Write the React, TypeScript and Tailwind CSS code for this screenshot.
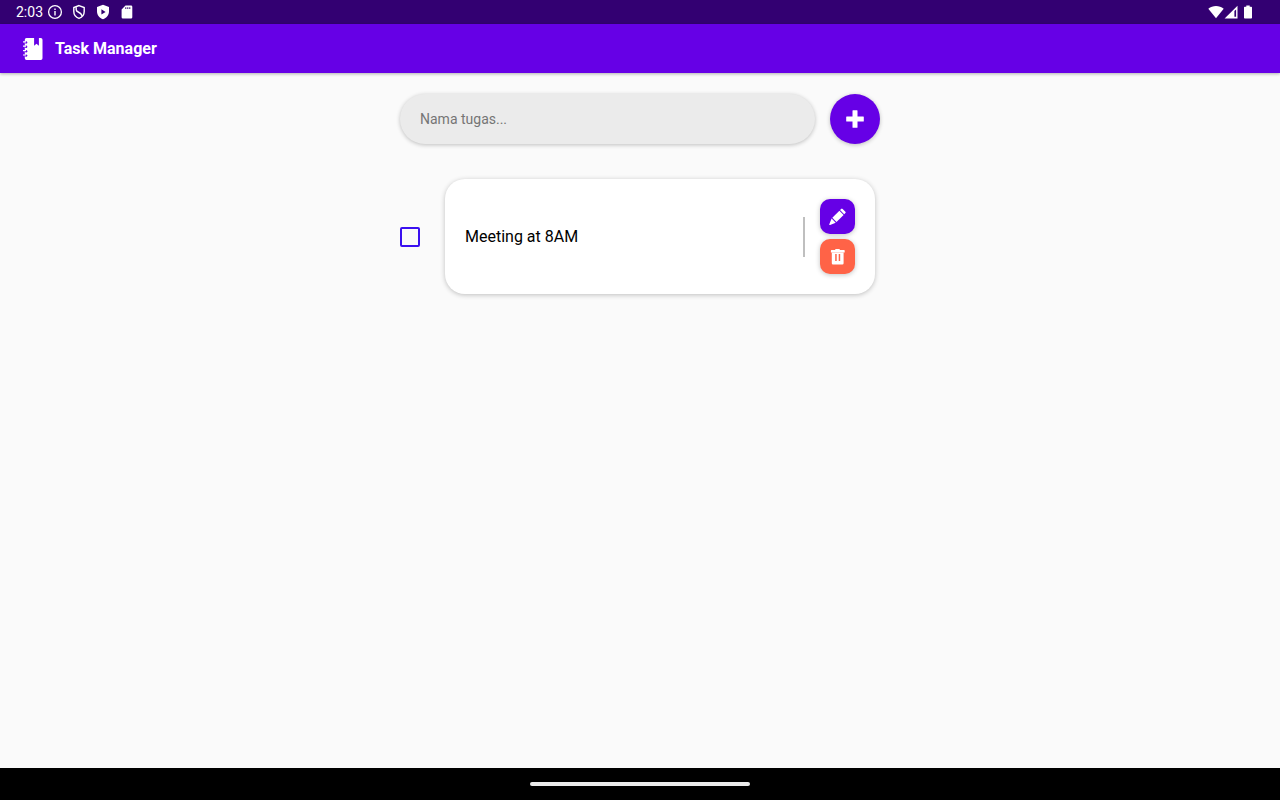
import React, { useState } from 'react';

const InfoIcon = () => (
	<svg className="w-4 h-4" viewBox="0 0 16 16" fill="none" stroke="currentColor">
		<circle cx="8" cy="8" r="6.4" strokeWidth="1.3" />
		<path d="M8 7v4.4M8 4.4v1.5" strokeWidth="1.4" />
	</svg>
);

const ShieldOffIcon = () => (
	<svg className="w-4 h-4" viewBox="0 0 16 16" fill="none" stroke="currentColor" strokeWidth="1.4">
		<path d="M8 1.6 13.2 3.6v4c0 3.2-2.2 5.8-5.2 6.8-3-1-5.2-3.6-5.2-6.8v-4z" />
		<path d="M5.2 3.2v2.6c0 1.2.8 1.7 2 2.2 1.6.7 3.2 1.8 4 4" />
	</svg>
);

const ShieldPlayIcon = () => (
	<svg className="w-4 h-4" viewBox="0 0 16 16" fill="currentColor">
		<path fillRule="evenodd" d="M8 .8 14 3v4.6c0 3.5-2.5 6.6-6 7.6-3.5-1-6-4.1-6-7.6V3zM6.4 5.2v5.4L10.6 7.9z" />
	</svg>
);

const SdCardIcon = () => (
	<svg className="w-4 h-4" viewBox="0 0 16 16" fill="currentColor">
		<path fillRule="evenodd" d="M6.5 1.5H12a1.3 1.3 0 0 1 1.3 1.3v10.4a1.3 1.3 0 0 1-1.3 1.3H3.9a1.3 1.3 0 0 1-1.3-1.3V5.4zM6.3 3.3v1.6h1V3.3zm2 0v1.6h1V3.3zm2 0v1.6h1V3.3z" />
	</svg>
);

const WifiIcon = () => (
	<svg className="w-4 h-4" viewBox="0 0 16 16" fill="currentColor">
		<path d="M.3 4.8C2.5 2.9 5.2 2 8 2s5.5.9 7.7 2.8L8 14.3z" />
	</svg>
);

const SignalIcon = () => (
	<svg className="w-4 h-4" viewBox="0 0 16 16" fill="currentColor">
		<path fillRule="evenodd" d="M13.5 1.8v12.7H.6zM10.4 7v5.8h1.7V5.4z" />
	</svg>
);

const BatteryIcon = () => (
	<svg className="w-4 h-4" viewBox="0 0 16 16" fill="currentColor">
		<path d="M6.3 1.5h3.4v1.2h1.5a.8.8 0 0 1 .8.8v10.2a.8.8 0 0 1-.8.8H4.800a.8.8 0 0 1-.8-.8V3.5a.8.8 0 0 1 .8-.8h1.5z" />
	</svg>
);

const NotebookIcon = () => (
	<svg className="w-5 h-6" viewBox="0 0 20 24" fill="currentColor">
		<path d="M3.5 1h7.6v7.700l2.400-2 2.400 2V1h1.900a1.700 1.700 0 0 1 1.700 1.700v18.600a1.700 1.700 0 0 1-1.700 1.700H3.500a1.700 1.700 0 0 1-1.700-1.700V2.700A1.700 1.700 0 0 1 3.500 1z" />
		<g className="text-[#6600e6]" fill="currentColor">
			<circle cx="3.100" cy="5.400" r="1.200" />
			<circle cx="3.100" cy="9.800" r="1.200" />
			<circle cx="3.100" cy="14.200" r="1.200" />
			<circle cx="3.100" cy="18.600" r="1.200" />
		</g>
		<path d="M.5 4.200h2.600v1.200H.5a.6.600 0 0 1 0-1.200zM.5 8.600h2.600v1.200H.5a.6.600 0 0 1 0-1.200zM.5 13h2.600v1.200H.5a.6.600 0 0 1 0-1.200zM.5 17.400h2.600v1.200H.5a.6.600 0 0 1 0-1.200z" />
	</svg>
);

const PlusIcon = () => (
	<svg className="w-5 h-5" viewBox="0 0 20 20" fill="currentColor">
		<path d="M8 1.2h4a.5.5 0 0 1 .5.5v5.8h5.8a.5.5 0 0 1 .5.5v4a.5.5 0 0 1-.5.5h-5.8v5.8a.5.5 0 0 1-.5.5H8a.5.5 0 0 1-.5-.5v-5.8H1.7a.5.5 0 0 1-.5-.5V8a.5.5 0 0 1 .5-.5h5.8V1.700a.5.5 0 0 1 .5-.5z" />
	</svg>
);

const PencilIcon = () => (
	<svg className="w-5 h-5" viewBox="0 0 20 20" fill="currentColor">
		<path d="M13.2 1.9a1 1 0 0 1 1.4 0l2.8 2.8a1 1 0 0 1 0 1.4l-1.2 1.2L12 3.100z" />
		<path d="M11.4 3.7l4.2 4.2-7.1 7.1-4.2-4.2z" />
		<path d="M3.6 11.6 7.7 15.7 2.100 18a.6.6 0 0 1-.8-.8z" />
	</svg>
);

const TrashIcon = () => (
	<svg className="w-5 h-5" viewBox="0 0 20 20" fill="currentColor">
		<path d="M7.3 1.9h4.4v1.2h4.4a.6.6 0 0 1 .6.6v1.9H2.9V3.7a.6.6 0 0 1 .6-.6h3.8z" />
		<path fillRule="evenodd" d="M3.8 5.5h11.8v10.7a1.2 1.2 0 0 1-1.2 1.2H5a1.2 1.2 0 0 1-1.2-1.2zM7.2 7v7h1.500V7zm3.5 0v7h1.500V7z" />
	</svg>
);

const StatusBar = () => (
	<div className="h-6 shrink-0 flex items-center justify-between bg-[#330072] text-white pl-4 pr-6">
		<div className="flex items-center gap-2">
			<div className="flex items-center gap-1">
				<span className="text-sm">2:03</span>
				<InfoIcon />
			</div>
			<ShieldOffIcon />
			<ShieldPlayIcon />
			<SdCardIcon />
		</div>
		<div className="flex items-center">
			<WifiIcon />
			<SignalIcon />
			<BatteryIcon />
		</div>
	</div>
);

const TaskItem = ({ task, onToggle, onEdit, onRemove }) => {
	return (
		<li className="flex items-center gap-[25px] pr-[5px]">
			<input
				type="checkbox"
				aria-label={task.name}
				checked={task.done}
				onChange={() => onToggle(task.id)}
				className="appearance-none shrink-0 w-5 h-5 border-2 border-[#3a10f0] rounded-xs checked:bg-[#3a10f0]"
			/>
			<div className="flex-1 flex items-center gap-[15px] bg-white rounded-[20px] p-5 shadow-[0_1px_5px_rgba(0,0,0,0.24)]">
				<p className="flex-1 text-base text-black">{task.name}</p>
				<div className="w-0.5 h-10 bg-[#bfbfbf]" />
				<div className="flex flex-col gap-[5px]">
					<button
						aria-label="Edit"
						onClick={() => onEdit(task.id)}
						className="w-[35px] h-[35px] flex items-center justify-center rounded-[10px] bg-[#6600e6] text-white shadow-[0_1px_5px_rgba(0,0,0,0.24)]"
					>
						<PencilIcon />
					</button>
					<button
						aria-label="Hapus"
						onClick={() => onRemove(task.id)}
						className="w-[35px] h-[35px] flex items-center justify-center rounded-[10px] bg-[#ff6347] text-white shadow-[0_1px_5px_rgba(0,0,0,0.24)]"
					>
						<TrashIcon />
					</button>
				</div>
			</div>
		</li>
	);
};

const App = () => {
	const [name, setName] = useState('');
	const [editId, setEditId] = useState(null);
	const [tasks, setTasks] = useState([{ id: 1, name: 'Meeting at 8AM', done: false }]);

	const saveTask = (e) => {
		e.preventDefault();
		if (!name.trim()) return;
		if (editId) {
			setTasks(tasks.map((task) => (task.id === editId ? { ...task, name } : task)));
		} else {
			setTasks([...tasks, { id: Date.now(), name, done: false }]);
		}
		setEditId(null);
		setName('');
	};

	const toggleTask = (id) => {
		setTasks(tasks.map((task) => (task.id === id ? { ...task, done: !task.done } : task)));
	};

	const editTask = (id) => {
		setEditId(id);
		setName(tasks.find((task) => task.id === id).name);
	};

	const removeTask = (id) => {
		setTasks(tasks.filter((task) => task.id !== id));
	};

	return (
		<div className="min-h-screen flex flex-col bg-[#fafafa] font-[Roboto,sans-serif]">
			<StatusBar />
			<header className="h-[49px] shrink-0 flex items-center gap-3 px-[23px] bg-[#6600e6] text-white shadow-[0_1px_3px_rgba(0,0,0,0.3)]">
				<NotebookIcon />
				<h1 className="text-base font-bold">Task Manager</h1>
			</header>

			<main className="flex-1 w-full max-w-[480px] mx-auto pt-[21px]">
				<form onSubmit={saveTask} className="flex gap-[15px] mb-[35px]">
					<input
						type="text"
						aria-label="Nama tugas"
						placeholder="Nama tugas..."
						value={name}
						onChange={(e) => setName(e.target.value)}
						className="flex-1 min-w-0 h-[50px] px-5 rounded-full bg-[#ebebeb] text-sm text-black placeholder:text-[#757575] shadow-[0_1px_4px_rgba(0,0,0,0.24)]"
					/>
					<button
						type="submit"
						aria-label="Tambah"
						className="w-[50px] h-[50px] flex items-center justify-center rounded-full bg-[#6600e6] text-white shadow-[0_1px_4px_rgba(0,0,0,0.24)]"
					>
						<PlusIcon />
					</button>
				</form>
				<ul className="flex flex-col gap-5">
					{tasks.map((task) => (
						<TaskItem key={task.id} task={task} onToggle={toggleTask} onEdit={editTask} onRemove={removeTask} />
					))}
				</ul>
			</main>

			{/* system navigation handle */}
			<div className="h-8 shrink-0 flex items-center justify-center bg-black">
				<div className="w-[220px] h-1 rounded-full bg-[#ebebeb]" />
			</div>
		</div>
	);
};

export default App;
